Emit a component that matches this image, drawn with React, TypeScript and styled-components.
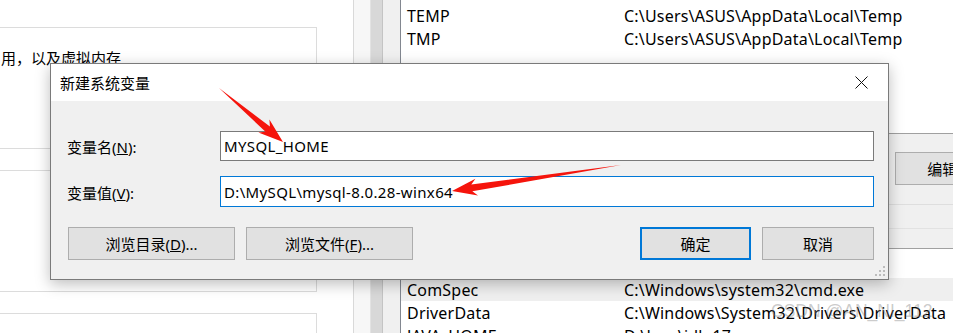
import styled, { createGlobalStyle } from "styled-components";

const GlobalStyle = createGlobalStyle`
  html, body {
    margin: 0;
    padding: 0;
    background: #ffffff;
  }
  * {
    box-sizing: border-box;
  }
`;

const UI_FONT = `"Noto Sans", "Noto Sans CJK SC", sans-serif`;

type Pt = [number, number];

// builds a screenshot-tool style arrow: thin tail, widening shaft, barbed head
const arrowPoints = (tail: Pt, tip: Pt) => {
  const dx = tip[0] - tail[0];
  const dy = tip[1] - tail[1];
  const len = Math.hypot(dx, dy);
  const ux = dx / len;
  const uy = dy / len;
  const nx = -uy;
  const ny = ux;
  const at = (back: number, side: number): string =>
    `${(tip[0] - ux * back + nx * side).toFixed(1)},${(tip[1] - uy * back + ny * side).toFixed(1)}`;
  return [
    `${tail[0]},${tail[1]}`,
    at(20, 3.4),
    at(25, 8.5),
    `${tip[0]},${tip[1]}`,
    at(25, -8.5),
    at(20, -3.4),
  ].join(" ");
};

const userVars = [
  { name: "TEMP", value: "C:\\Users\\ASUS\\AppData\\Local\\Temp" },
  { name: "TMP", value: "C:\\Users\\ASUS\\AppData\\Local\\Temp" },
  { name: "", value: "" },
];

const sysVars = [
  { name: "ComSpec", value: "C:\\Windows\\system32\\cmd.exe", active: true },
  { name: "DriverData", value: "C:\\Windows\\System32\\Drivers\\DriverData" },
  { name: "JAVA_HOME", value: "D:\\Java\\jdk-17" },
];

export default function App() {
  return (
    <>
      <GlobalStyle />
      <Desktop>
        <SystemPage>
          <GroupBox>
            <GroupText>用，以及虚拟内存</GroupText>
          </GroupBox>
          <GroupBox />
          <GroupBox />
        </SystemPage>

        <WindowGap>
          <GapBand />
          <GapTrack />
          <GapBand $light />
        </WindowGap>

        <EnvPane>
          <VarList>
            {userVars.map((v, i) => (
              <VarRow key={i}>
                <VarName>{v.name}</VarName>
                <VarValue>{v.value}</VarValue>
              </VarRow>
            ))}
          </VarList>
          <EnvButtons>
            <EnvButton>新建(N)...</EnvButton>
            <EnvButton>编辑(E)...</EnvButton>
            <EnvButton>删除(D)</EnvButton>
          </EnvButtons>
          <Divider />
          <SysList>
            <ListHeader />
            {sysVars.map((v) => (
              <VarRow key={v.name} $active={v.active}>
                <VarName>{v.name}</VarName>
                <VarValue>{v.value}</VarValue>
              </VarRow>
            ))}
          </SysList>
        </EnvPane>

        <Dialog>
          <TitleBar>
            <Title>新建系统变量</Title>
            <CloseButton aria-label="关闭">
              <svg width="13" height="13" viewBox="0 0 13 13">
                <path d="M0.5 0.5 L12.5 12.5 M12.5 0.5 L0.5 12.5" stroke="#111" strokeWidth="1" />
              </svg>
            </CloseButton>
          </TitleBar>
          <DialogBody>
            <FieldRow>
              <FieldLabel>
                变量名(<u>N</u>):
              </FieldLabel>
              <TextField defaultValue="MYSQL_HOME" />
            </FieldRow>
            <FieldRow>
              <FieldLabel>
                变量值(<u>V</u>):
              </FieldLabel>
              <TextField defaultValue="D:\MySQL\mysql-8.0.28-winx64" $focused />
            </FieldRow>
            <ButtonRow>
              <ButtonGroup>
                <PushButton $width={167}>
                  浏览目录(<u>D</u>)...
                </PushButton>
                <PushButton $width={167}>
                  浏览文件(<u>F</u>)...
                </PushButton>
              </ButtonGroup>
              <ButtonGroup>
                <PushButton $width={111} $default>
                  确定
                </PushButton>
                <PushButton $width={112}>取消</PushButton>
              </ButtonGroup>
            </ButtonRow>
            <SizeGrip width="10" height="10" viewBox="0 0 10 10">
              {[
                [8, 0],
                [8, 4],
                [4, 4],
                [8, 8],
                [4, 8],
                [0, 8],
              ].map(([x, y]) => (
                <rect key={`${x}-${y}`} x={x} y={y} width="2" height="2" fill="#bcbcbc" />
              ))}
            </SizeGrip>
          </DialogBody>
        </Dialog>

        <Annotations width="953" height="333" viewBox="0 0 953 333">
          <polygon points={arrowPoints([219, 88], [283, 142])} fill="#f5140c" />
          <polygon points={arrowPoints([621, 165], [452, 191])} fill="#f5140c" />
        </Annotations>

        <Watermark>CSDN @AN_NI_112</Watermark>
      </Desktop>
    </>
  );
}

const Desktop = styled.div`
  position: relative;
  width: 953px;
  height: 333px;
  overflow: hidden;
  display: grid;
  grid-template-columns: 353px 47px 1fr;
  background: #ffffff;
  font-family: ${UI_FONT};
  font-size: 15px;
  color: #000;
`;

const SystemPage = styled.div`
  display: flex;
  flex-direction: column;
  gap: 21px;
  padding-top: 27px;
  background: #ffffff;
`;

const GroupBox = styled.div`
  flex: none;
  width: 318px;
  height: 122px;
  margin-left: -1px;
  border: 1px solid #dcdcdc;
  padding: 19px 0 0 1px;
`;

const GroupText = styled.div`
  line-height: 22px;
  white-space: nowrap;
`;

const WindowGap = styled.div`
  display: flex;
  background: #f0f0f0;
  border-left: 1px solid #d9d9d9;
`;

const GapBand = styled.div<{ $light?: boolean }>`
  flex: 1;
  background: ${(p) => (p.$light ? "#f0f0f0" : "#f7f7f7")};
  border-right: 1px solid ${(p) => (p.$light ? "#f0f0f0" : "#e3e3e3")};
`;

const GapTrack = styled.div`
  width: 12px;
  background: #d8d8d8;
  border-right: 1px solid #c4c4c4;
`;

const EnvPane = styled.div`
  display: flex;
  flex-direction: column;
  background: #f0f0f0;
  font-size: 16px;
  letter-spacing: 0.2px;
`;

const VarList = styled.div`
  height: 134px;
  flex: none;
  padding-top: 4px;
  background: #ffffff;
  border-left: 1px solid #828790;
  border-bottom: 1px solid #a0a0a0;
`;

const SysList = styled.div`
  flex: 1;
  background: #ffffff;
  border-left: 1px solid #828790;
  border-top: 1px solid #a0a0a0;
`;

const ListHeader = styled.div`
  height: 29px;
  background: #ffffff;
`;

const VarRow = styled.div<{ $active?: boolean }>`
  display: flex;
  height: 23px;
  align-items: center;
  padding-left: 6px;
  background: ${(p) => (p.$active ? "#efefef" : "transparent")};
  white-space: nowrap;
`;

const VarName = styled.span`
  width: 217px;
  flex: none;
`;

const VarValue = styled.span`
  flex: none;
`;

const EnvButtons = styled.div`
  display: flex;
  flex: none;
  gap: 12px;
  height: 70px;
  padding: 18px 0 0 359px;
`;

const EnvButton = styled.div`
  flex: none;
  width: 124px;
  height: 33px;
  display: flex;
  align-items: center;
  justify-content: center;
  background: #e1e1e1;
  border: 1px solid #adadad;
  font-size: 15px;
  letter-spacing: 0;
  white-space: nowrap;
`;

const Divider = styled.div`
  flex: none;
  height: 25px;
  margin-bottom: 19px;
  border-top: 1px solid #dedede;
  border-bottom: 1px solid #e2e2e2;
`;

const Dialog = styled.div`
  position: absolute;
  left: 50px;
  top: 63px;
  width: 839px;
  height: 217px;
  display: flex;
  flex-direction: column;
  border: 1px solid #7a7a7a;
  background: #f0f0f0;
  box-shadow: 0 4px 14px rgba(0, 0, 0, 0.26);
`;

const TitleBar = styled.div`
  height: 37px;
  flex: none;
  display: flex;
  align-items: center;
  justify-content: space-between;
  padding-left: 9px;
  background: #ffffff;
`;

const Title = styled.span`
  font-size: 15px;
`;

const CloseButton = styled.div`
  width: 46px;
  height: 37px;
  display: flex;
  align-items: center;
  justify-content: center;
  margin-right: 4px;
`;

const DialogBody = styled.div`
  position: relative;
  flex: 1;
  display: flex;
  flex-direction: column;
  padding: 30px 14px 0 16px;
`;

const FieldRow = styled.div`
  display: flex;
  align-items: center;
  height: 30px;
  margin-bottom: 15px;

  & + & {
    height: 31px;
    margin-bottom: 20px;
  }
`;

const FieldLabel = styled.label`
  width: 153px;
  flex: none;
  padding-top: 1px;
`;

const TextField = styled.input<{ $focused?: boolean }>`
  flex: 1;
  height: 100%;
  border: 1px solid ${(p) => (p.$focused ? "#0078d7" : "#7a7a7a")};
  background: #ffffff;
  padding: 0 0 0 3px;
  font: inherit;
  letter-spacing: 0.35px;
  color: #000;
  outline: none;
`;

const ButtonRow = styled.div`
  display: flex;
  justify-content: space-between;
  padding-left: 1px;
`;

const ButtonGroup = styled.div`
  display: flex;
  gap: 11px;
`;

const PushButton = styled.div<{ $width: number; $default?: boolean }>`
  width: ${(p) => p.$width}px;
  height: 33px;
  display: flex;
  align-items: center;
  justify-content: center;
  background: #e1e1e1;
  border: ${(p) => (p.$default ? "2px solid #0078d7" : "1px solid #adadad")};
  white-space: nowrap;
`;

const SizeGrip = styled.svg`
  position: absolute;
  right: 3px;
  bottom: 3px;
`;

const Annotations = styled.svg`
  position: absolute;
  left: 0;
  top: 0;
  pointer-events: none;
`;

const Watermark = styled.div`
  position: absolute;
  left: 771px;
  top: 301px;
  font-family: "Liberation Sans", sans-serif;
  font-size: 17.5px;
  color: rgba(130, 130, 130, 0.42);
  white-space: nowrap;
  pointer-events: none;
`;
